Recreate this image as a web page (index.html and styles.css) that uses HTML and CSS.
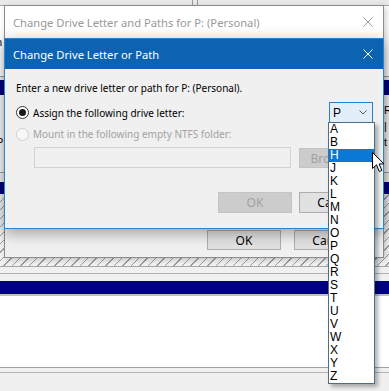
FILE: index.html
```html
<!DOCTYPE html>
<html lang="en">
<head>
    <meta charset="UTF-8">
    <meta name="viewport" content="width=device-width, initial-scale=1.0">
    <title>Change Drive Letter or Path</title>
    <link rel="stylesheet" href="styles.css">
</head>
<body>
    <div class="desktop">
        <!-- Disk Management, behind the two dialogs -->
        <div class="diskmgmt">
            <div class="dm-toolbar"><span class="dm-split"></span></div>
            <div class="dm-list-top">
                <div class="dm-text-row dm-row-n"><span class="dm-clip-left">n</span></div>
            </div>
            <div class="dm-bar dm-bar-first"></div>
            <div class="dm-part">
                <div class="dm-text-row"><span></span><span class="dm-clip-right">R</span></div>
                <div class="dm-text-row"><span></span><span class="dm-clip-right">|</span></div>
                <div class="dm-text-row"><span class="dm-clip-left">P</span><span class="dm-clip-right">t</span></div>
            </div>
            <div class="dm-bar dm-bar-second"></div>
            <div class="dm-hatch"></div>
            <div class="dm-rules"></div>
            <div class="dm-bar dm-bar-third"></div>
            <div class="dm-white"></div>
            <div class="dm-foot"></div>
        </div>

        <!-- Change Drive Letter and Paths (inactive) -->
        <div class="window outer">
            <div class="titlebar">
                <span class="title">Change Drive Letter and Paths for P: (Personal)</span>
                <svg class="close" width="10" height="10" viewBox="0 0 10 10">
                    <path d="M0.5 0.5 L9.5 9.5 M9.5 0.5 L0.5 9.5" />
                </svg>
            </div>
            <div class="outer-body">
                <div class="btn-row outer-buttons">
                    <button class="btn">OK</button>
                    <button class="btn">Cancel</button>
                </div>
            </div>
        </div>

        <!-- Change Drive Letter or Path (active) -->
        <div class="window inner">
            <div class="titlebar">
                <span class="title">Change Drive Letter or Path</span>
                <svg class="close" width="10" height="10" viewBox="0 0 10 10">
                    <path d="M0.5 0.5 L9.5 9.5 M9.5 0.5 L0.5 9.5" />
                </svg>
            </div>
            <div class="dlg-body">
                <p class="prompt">Enter a new drive letter or path for P: (Personal).</p>
                <div class="option-row">
                    <label class="radio checked"><span class="radio-dot"></span>Assign the following drive letter:</label>
                    <div class="combo">
                        <span>P</span>
                        <svg class="chevron" width="8" height="5" viewBox="0 0 8 5">
                            <path d="M0.5 0.5 L4 4 L7.5 0.5" />
                        </svg>
                    </div>
                </div>
                <label class="radio disabled"><span class="radio-dot"></span>Mount in the following empty NTFS folder:</label>
                <div class="folder-row">
                    <div class="textbox"></div>
                    <button class="btn" disabled>Browse...</button>
                </div>
                <div class="btn-row inner-buttons">
                    <button class="btn" disabled>OK</button>
                    <button class="btn">Cancel</button>
                </div>
            </div>
        </div>

        <!-- open drop-down of the drive letter combo -->
        <ul class="drop-list">
            <li>A</li>
            <li>B</li>
            <li class="hot">H</li>
            <li>J</li>
            <li>K</li>
            <li>L</li>
            <li>M</li>
            <li>N</li>
            <li>O</li>
            <li>P</li>
            <li>Q</li>
            <li>R</li>
            <li>S</li>
            <li>T</li>
            <li>U</li>
            <li>V</li>
            <li>W</li>
            <li>X</li>
            <li>Y</li>
            <li>Z</li>
        </ul>

        <svg class="cursor" width="13" height="21" viewBox="0 0 13 21">
            <path d="M0.5 0.5 V16.5 L4.5 12.8 L7.3 19.5 L9.8 18.4 L7.1 11.9 H12 Z" />
        </svg>
    </div>
</body>
</html>
```

FILE: styles.css
```css
body {
    margin: 0;
    background-color: #f0f0f0;
    font-family: "Noto Sans", "Open Sans", sans-serif;
}

.desktop {
    position: relative;
    width: 389px;
    height: 391px;
    overflow: hidden;
}

/* ---------- Disk Management background ---------- */

.diskmgmt {
    display: flex;
    flex-direction: column;
    height: 100%;
    font-family: "Liberation Sans", Arial, sans-serif;
    font-size: 11px;
    color: #000;
}

.dm-toolbar {
    height: 5px;
    flex-shrink: 0;
    background-color: #e9e9e9;
    border-bottom: 1px solid #a8a8a8;
    padding-left: 192px;
    display: flex;
}

.dm-split {
    width: 4px;
    border-left: 1px solid #9a9a9a;
    border-right: 1px solid #9a9a9a;
}

.dm-list-top {
    height: 71px;
    flex-shrink: 0;
    background-color: #fff;
    box-sizing: border-box;
    border-bottom: 1px solid #a0a0a0;
    padding-top: 31px;
}

.dm-text-row {
    display: flex;
    justify-content: space-between;
    height: 11px;
    line-height: 11px;
}

.dm-clip-left {
    margin-left: -4px;
}

.dm-clip-right {
    width: 5px;
}

.dm-bar {
    flex-shrink: 0;
    background-color: #000080;
}

.dm-bar-first {
    height: 15px;
    margin-top: 3px;
}

.dm-part {
    height: 78px;
    flex-shrink: 0;
    background-color: #f7f7f7;
    border-bottom: 1px solid #a0a0a0;
    padding-top: 10px;
    box-sizing: border-box;
    display: flex;
    flex-direction: column;
    gap: 5px;
}

.dm-bar-second {
    height: 12px;
    margin-top: 9px;
}

.dm-hatch {
    height: 72px;
    flex-shrink: 0;
    background-color: #f2f2f2;
    background-image: repeating-linear-gradient(135deg, transparent 0 5px, #9c9c9c 5px 6px);
    border-bottom: 1px solid #a6a6a6;
}

.dm-rules {
    height: 6px;
    flex-shrink: 0;
    border-bottom: 1px solid #b0b0b0;
    margin-bottom: 7px;
}

.dm-bar-third {
    height: 13px;
    border-bottom: 2px solid #c0c0c0;
}

.dm-white {
    height: 71px;
    flex-shrink: 0;
    background-color: #fff;
    border-bottom: 1px solid #a0a0a0;
}

.dm-foot {
    height: 4px;
    flex-shrink: 0;
    border-bottom: 1px solid #b4b4b4;
}

/* ---------- windows ---------- */

.window {
    position: absolute;
    box-sizing: border-box;
    display: flex;
    flex-direction: column;
}

.titlebar {
    display: flex;
    align-items: center;
    justify-content: space-between;
    padding-left: 8px;
    padding-right: 10px;
    font-size: 11.2px;
}

.close path {
    fill: none;
    stroke-width: 1;
}

.outer {
    left: 4px;
    top: 5px;
    width: 380px;
    height: 253px;
    background-color: #f0f0f0;
    border: 1px solid #8c8c8c;
    box-shadow: 2px 2px 6px rgba(0, 0, 0, 0.2);
}

.outer .titlebar {
    height: 32px;
    background-color: #fff;
    color: #999;
}

.outer .close path {
    stroke: #999;
}

.outer-body {
    flex: 1;
    display: flex;
    flex-direction: column;
    justify-content: flex-end;
}

.outer-buttons {
    gap: 13px;
    padding-right: 15px;
    padding-bottom: 7px;
}

.inner {
    left: 4px;
    top: 38px;
    width: 380px;
    height: 191px;
    background-color: #f0f0f0;
    border: 1px solid #2a84d2;
    box-shadow: 0 4px 14px rgba(0, 0, 0, 0.35);
}

.inner .titlebar {
    height: 30px;
    background-color: #0b63b2;
    color: #fff;
}

.inner .close path {
    stroke: #fff;
}

.dlg-body {
    flex: 1;
    display: flex;
    flex-direction: column;
    padding: 12px 10px 0 11px;
    font-size: 10px;
    color: #000;
}

.prompt {
    margin: 0;
    height: 14px;
    line-height: 14px;
}

.option-row {
    display: flex;
    justify-content: space-between;
    align-items: center;
    margin-top: 7px;
}

.radio {
    display: flex;
    align-items: center;
    gap: 4px;
    height: 16px;
    line-height: 16px;
}

.radio-dot {
    width: 13px;
    height: 13px;
    box-sizing: border-box;
    border-radius: 50%;
    border: 1px solid #333;
    background-color: #fff;
    display: flex;
    align-items: center;
    justify-content: center;
}

.radio.checked .radio-dot::after {
    content: "";
    width: 7px;
    height: 7px;
    border-radius: 50%;
    background-color: #1a1a1a;
}

.radio.disabled {
    color: #a2a2a2;
    margin-top: 3px;
}

.radio.disabled .radio-dot {
    border-color: #cfcfcf;
    background-color: #f7f7f7;
}

.combo {
    width: 44px;
    height: 21px;
    box-sizing: border-box;
    border: 1px solid #2b7fcf;
    background-color: #e2eefa;
    display: flex;
    align-items: center;
    justify-content: space-between;
    padding: 0 5px 0 3px;
    font-family: "Liberation Sans", Arial, sans-serif;
    font-size: 12px;
}

.chevron path {
    fill: none;
    stroke: #555;
    stroke-width: 1;
}

.folder-row {
    display: flex;
    gap: 8px;
    margin-top: 5px;
    padding-left: 18px;
}

.textbox {
    width: 257px;
    height: 21px;
    box-sizing: border-box;
    border: 1px solid #d2d2d2;
    background-color: #f0f0f0;
}

.btn {
    width: 74px;
    height: 20px;
    box-sizing: border-box;
    margin: 0;
    padding: 0;
    border: 1px solid #adadad;
    background-color: #e1e1e1;
    color: #000;
    font-family: "Noto Sans", "Open Sans", sans-serif;
    font-size: 12px;
}

.btn:disabled {
    border-color: #c4c4c4;
    background-color: #cccccc;
    color: #a0a0a0;
}

.folder-row .btn {
    margin-top: 1px;
}

.btn-row {
    display: flex;
    justify-content: flex-end;
}

.inner-buttons {
    gap: 7px;
    margin-top: 24px;
}

.inner-buttons .btn {
    height: 21px;
}

/* ---------- popup list ---------- */

.drop-list {
    position: absolute;
    left: 328px;
    top: 122px;
    width: 45px;
    margin: 0;
    padding: 0;
    list-style: none;
    background-color: #fff;
    border: 1px solid #4b6f8b;
    box-shadow: 3px 3px 4px rgba(0, 0, 0, 0.3);
    font-family: "Liberation Sans", Arial, sans-serif;
    font-size: 12px;
}

.drop-list li {
    height: 13px;
    line-height: 13px;
    padding-left: 1px;
}

.drop-list li.hot {
    background-color: #0a78d6;
    color: #fff;
}

.cursor {
    position: absolute;
    left: 372px;
    top: 152px;
}

.cursor path {
    fill: #fff;
    stroke: #000;
    stroke-width: 1;
    stroke-linejoin: miter;
}
```
